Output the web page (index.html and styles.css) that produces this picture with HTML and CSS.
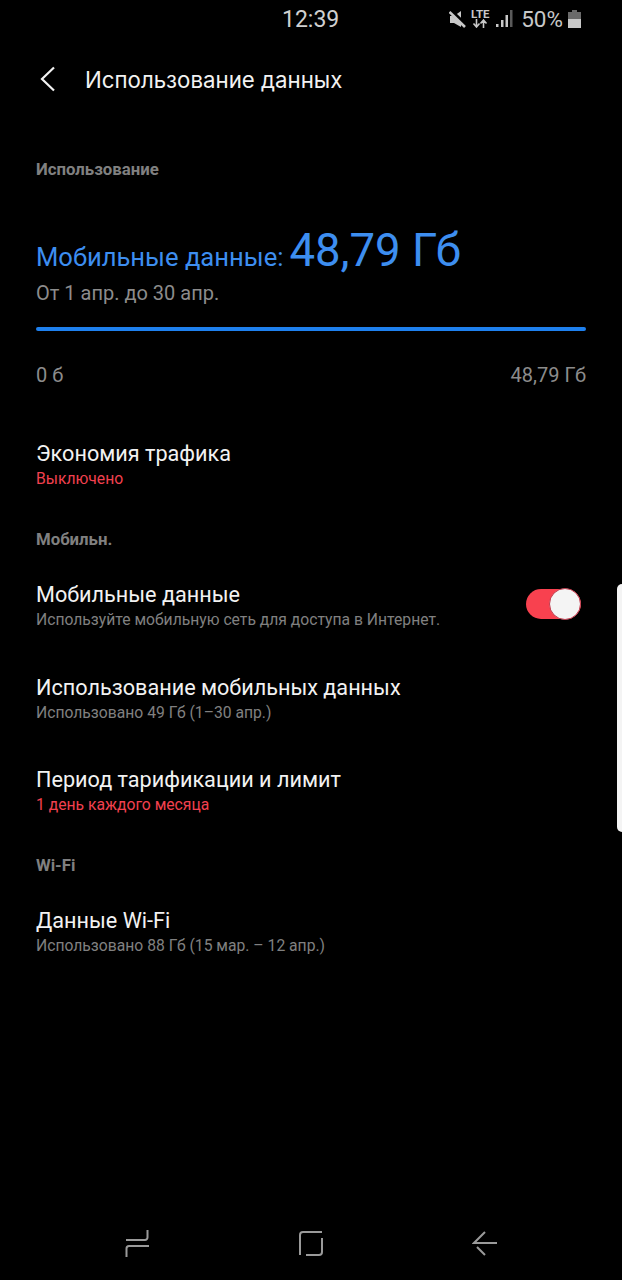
FILE: index.html
```html
<!DOCTYPE html>
<html lang="ru">
<head>
<meta charset="utf-8">
<title>Использование данных</title>
<link rel="stylesheet" href="styles.css">
</head>
<body>
<div class="screen">
  <div class="status">
    <span class="clock">12:39</span>
    <div class="status-right">
      <svg class="i-mute" width="17" height="18" viewBox="0 0 17 18"><path d="M1 6h4l7-5v16l-7-4H1z" fill="#c8c8c8"/><path d="M1 0.500l16 15" stroke="#000" stroke-width="4.500"/><path d="M0.500 2l15.500 15" stroke="#c8c8c8" stroke-width="2.600"/></svg>
      <div class="lte"><span class="lte-t">LTE</span><svg width="16" height="9" viewBox="0 0 16 9"><path d="M4.5 0v7M1.5 4.5l3 3.5 3-3.5M11.500 9V2M8.500 4.500l3-3.500 3 3.500" fill="none" stroke="#c8c8c8" stroke-width="1.600"/></svg></div>
      <svg class="i-sig" width="17" height="17" viewBox="0 0 17 17"><rect x="0" y="14" width="2.500" height="3" fill="#c8c8c8"/><rect x="5" y="10" width="2.500" height="7" fill="#c8c8c8"/><rect x="9.500" y="5" width="2.500" height="12" fill="#c8c8c8"/><rect x="14" y="0" width="2.500" height="17" fill="#5a5a5a"/></svg>
      <span class="pct">50%</span>
      <svg class="i-bat" width="13" height="18" viewBox="0 0 13 18"><rect x="4" y="0" width="5" height="2" fill="#6a6a6a"/><rect x="0" y="2" width="13" height="7" fill="#6a6a6a"/><rect x="0" y="9" width="13" height="9" fill="#c8c8c8"/></svg>
    </div>
  </div>

  <header class="appbar">
    <svg class="back" width="16" height="26" viewBox="0 0 16 26"><path d="M15 1.500L3 13l12 11.500" fill="none" stroke="#f2f2f2" stroke-width="2.200"/></svg>
    <h1 class="title">Использование данных</h1>
  </header>

  <main class="content">
    <h2 class="section first">Использование</h2>
    <div class="usage">
      <span class="usage-label">Мобильные данные:</span>
      <span class="usage-value">48,79 Гб</span>
    </div>
    <p class="period">От 1 апр. до 30 апр.</p>
    <div class="bar"></div>
    <div class="scale"><span>0 б</span><span>48,79 Гб</span></div>

    <div class="row saver">
      <div class="row-title">Экономия трафика</div>
      <div class="row-sub red">Выключено</div>
    </div>

    <h2 class="section">Мобильн.</h2>
    <div class="row toggle-row">
      <div>
        <div class="row-title">Мобильные данные</div>
        <div class="row-sub">Используйте мобильную сеть для доступа в Интернет.</div>
      </div>
      <div class="switch"><div class="knob"></div></div>
    </div>
    <div class="row">
      <div class="row-title">Использование мобильных данных</div>
      <div class="row-sub">Использовано 49 Гб (1–30 апр.)</div>
    </div>
    <div class="row wifi-before">
      <div class="row-title">Период тарификации и лимит</div>
      <div class="row-sub red">1 день каждого месяца</div>
    </div>

    <h2 class="section">Wi-Fi</h2>
    <div class="row">
      <div class="row-title">Данные Wi-Fi</div>
      <div class="row-sub">Использовано 88 Гб (15 мар. – 12 апр.)</div>
    </div>
  </main>

  <div class="edge"></div>

  <nav class="navbar">
    <svg width="26" height="28" viewBox="0 0 26 28"><path d="M2 10h19a2.500 2.500 0 0 0 2.500-2.500V0M25 16H5a2.500 2.500 0 0 0-2.500 2.500V27" fill="none" stroke="#9a9a9a" stroke-width="2"/></svg>
    <svg width="26" height="26" viewBox="0 0 26 26"><path d="M24 1H5a3 3 0 0 0-3 3v20M24 7v14a3 3 0 0 1-3 3H8" fill="none" stroke="#9a9a9a" stroke-width="2"/></svg>
    <svg width="26" height="26" viewBox="0 0 26 26"><path d="M13 1L2 12h23M5 16l8 8" fill="none" stroke="#9a9a9a" stroke-width="2"/></svg>
  </nav>
</div>
</body>
</html>
```
FILE: styles.css
```css
* { box-sizing: border-box; }
html, body { margin: 0; padding: 0; background: #000; }
.screen {
  position: relative;
  width: 622px;
  height: 1280px;
  background: #000;
  overflow: hidden;
  font-family: Roboto, "Noto Sans", sans-serif;
  color: #f2f2f2;
}
.status {
  height: 37px;
  position: relative;
  display: flex;
  justify-content: flex-end;
  align-items: center;
  padding-right: 41px;
}
.clock {
  position: absolute;
  left: 282px;
  top: 6px;
  font-size: 23px;
  line-height: 28px;
  color: #d0d0d0;
}
.status-right { display: flex; align-items: center; }
.i-mute { margin-right: 5px; }
.lte { display: flex; flex-direction: column; align-items: center; width: 18px; margin-right: 7px; }
.lte-t { font-size: 11.500px; line-height: 10px; font-weight: 700; color: #c8c8c8; }
.i-sig { margin-right: 8px; }
.pct { font-size: 22.500px; color: #c8c8c8; margin-right: 5px; line-height: 26px; }
.appbar {
  display: flex;
  align-items: center;
  height: 60px;
  margin-top: 12px;
  padding-left: 39px;
}
.title {
  margin: 0 0 0 30px;
  font-family: Inter, Roboto, sans-serif;
  font-size: 22.250px;
  font-weight: 400;
}
.content { padding: 0 36px; }
.section {
  margin: 0;
  font-size: 16.800px;
  line-height: 20px;
  font-weight: 700;
  color: #808080;
  height: 20px;
}
.section.first { margin-top: 50px; }
.usage { display: flex; align-items: baseline; margin-top: 45px; height: 54px; color: #3d8ef0; }
.usage-label { font-size: 25.600px; }
.usage-value { font-size: 45.500px; margin-left: 6px; }
.period { margin: 3px 0 0; font-size: 20px; line-height: 24px; color: #8c8c8c; }
.bar { margin-top: 22px; height: 4px; border-radius: 2px; background: #1e80ee; }
.scale {
  display: flex;
  justify-content: space-between;
  margin-top: 32px;
  font-size: 20px;
  line-height: 24px;
  color: #8c8c8c;
}
.row { height: 92.500px; }
.row-title { font-size: 21.650px; line-height: 26px; color: #f2f2f2; }
.row-sub { margin-top: 2px; font-size: 15.700px; line-height: 20px; color: #808080; }
.red { color: #f2404f; }
.saver { margin-top: 54px; height: 88px; }
.toggle-row { display: flex; justify-content: space-between; align-items: flex-start; margin-top: 33px; }
.section + .row { margin-top: 33px; }
.wifi-before { height: 88px; }
.switch {
  position: relative;
  width: 55px;
  height: 30px;
  margin: 7px 5px 0 0;
  border-radius: 15px;
  background: #f8414f;
}
.knob {
  position: absolute;
  right: 0;
  top: -1px;
  width: 32px;
  height: 32px;
  border-radius: 50%;
  background: #f4f4f4;
  border: 1.500px solid #c23a4c;
}
.edge {
  position: absolute;
  right: 0;
  top: 584px;
  width: 5px;
  height: 248px;
  background: #f4f4f4;
  border-radius: 6px 0 0 6px;
}
.navbar {
  position: absolute;
  left: 0;
  right: 0;
  bottom: 22px;
  display: flex;
  justify-content: space-between;
  align-items: center;
  padding: 0 124px;
}
```
